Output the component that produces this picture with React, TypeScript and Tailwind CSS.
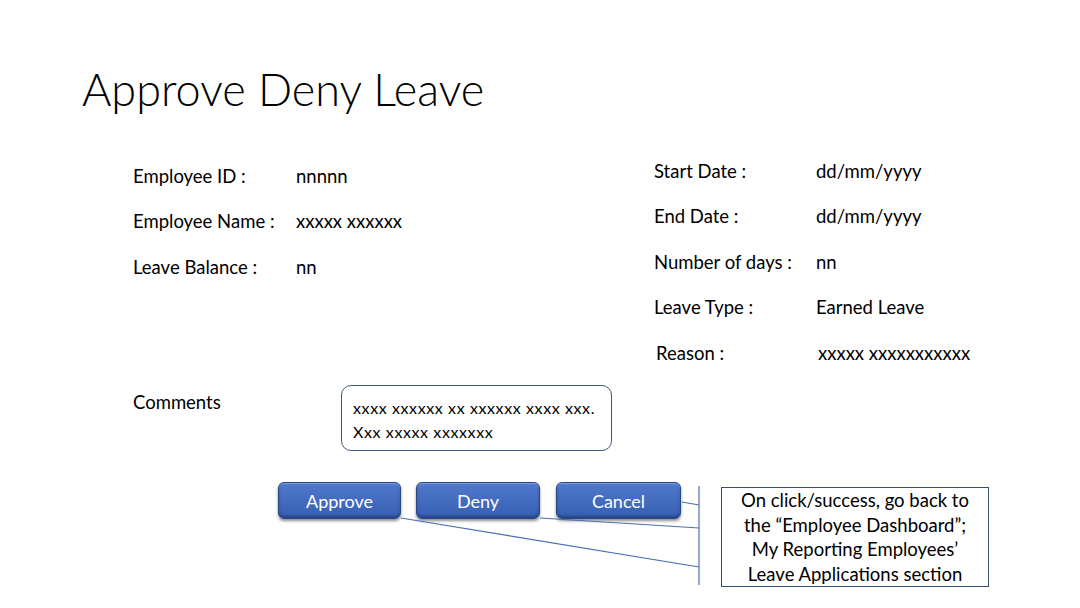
export default function App() {
  const left = [
    { label: 'Employee ID :', value: 'nnnnn' },
    { label: 'Employee Name :', value: 'xxxxx xxxxxx' },
    { label: 'Leave Balance :', value: 'nn' },
  ];
  const right = [
    { label: 'Start Date :', value: 'dd/mm/yyyy' },
    { label: 'End Date :', value: 'dd/mm/yyyy' },
    { label: 'Number of days :', value: 'nn' },
    { label: 'Leave Type :', value: 'Earned Leave' },
    { label: 'Reason :', value: 'xxxxx xxxxxxxxxxx' },
  ];
  const btn =
    'h-[37px] rounded-[6px] border border-[#284786] bg-gradient-to-b from-[#5079cc] to-[#365fb3] text-white text-[18px] leading-none flex items-center justify-center shadow-[inset_0_1px_1px_rgba(255,255,255,0.3),inset_0_-2px_3px_rgba(0,0,0,0.3),0_2px_3px_rgba(0,0,0,0.45)]';

  return (
    <div className="relative w-[1080px] h-[608px] bg-white text-black overflow-hidden font-['Lato','Liberation_Sans',sans-serif]">
      {/* Title */}
      <div className="h-[149px] pl-[82px] pt-[63px]">
        <h1 className="text-[45px] leading-[52px] font-light">Approve Deny Leave</h1>
      </div>

      {/* Details */}
      <div className="flex text-[18.5px]">
        <div className="w-[654px] pl-[133px] pt-[5px]">
          {left.map((r) => (
            <div key={r.label} className="flex h-[45.5px] items-center">
              <span className="w-[163px]">{r.label}</span>
              <span>{r.value}</span>
            </div>
          ))}
        </div>
        <div>
          {right.map((r, i) => (
            <div key={r.label} className={`flex h-[45.5px] items-center ${i === 4 ? 'pl-[2px]' : ''}`}>
              <span className="w-[162px]">{r.label}</span>
              <span>{r.value}</span>
            </div>
          ))}
        </div>
      </div>

      {/* Comments */}
      <div className="mt-[8.5px] flex pl-[133px]">
        <div className="w-[208px] pt-[5px] text-[18.5px] leading-[24px]">Comments</div>
        <div className="w-[271px] h-[66px] rounded-[10px] border-[1.5px] border-[#44597a] px-[11px] pt-[10px] text-[16px] tracking-[0.6px] leading-[24px]">
          xxxx xxxxxx xx xxxxxx xxxx xxx.
          <br />
          Xxx xxxxx xxxxxxx
        </div>
      </div>

      {/* Actions */}
      <div className="mt-[31px] flex items-start pl-[278px]">
        <button className={`${btn} w-[123px]`}>Approve</button>
        <button className={`${btn} w-[124px] ml-[15px]`}>Deny</button>
        <button className={`${btn} w-[125px] ml-[16px]`}>Cancel</button>
        <div className="ml-[40px] mt-[5px] w-[268px] h-[100px] border-[1.5px] border-[#30506f] text-center text-[18.5px] leading-[24.5px]">
          On click/success, go back to
          <br />
          the “Employee Dashboard”;
          <br />
          My Reporting Employees’
          <br />
          Leave Applications section
        </div>
      </div>

      {/* Callout connectors */}
      <svg className="pointer-events-none absolute inset-0" width="1080" height="608">
        <g stroke="#4a6fae" strokeWidth="1.2" fill="none">
          <line x1="699" y1="486" x2="699" y2="585" />
          <line x1="682" y1="502" x2="699" y2="505" />
          <line x1="540" y1="518" x2="699" y2="528" />
          <line x1="401" y1="518" x2="699" y2="567" />
        </g>
      </svg>
    </div>
  );
}
